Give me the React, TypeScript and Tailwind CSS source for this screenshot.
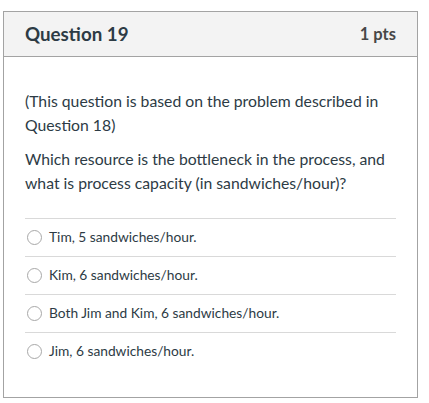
const answers = [
  'Tim, 5 sandwiches/hour.',
  'Kim, 6 sandwiches/hour.',
  'Both Jim and Kim, 6 sandwiches/hour.',
  'Jim, 6 sandwiches/hour.',
];

export default function App() {
  return (
    <div className="min-h-screen bg-white pt-[11px] pl-[3px] font-['Lato',sans-serif] text-[#2d3b45]">
      <div className="w-[415px] border border-[#a3a3a3]">
        <div className="flex h-[45px] items-center justify-between border-b border-[#a3a3a3] bg-[#f3f3f3] px-[21px]">
          <h2 className="text-[18.75px] font-bold">Question 19</h2>
          <span className="text-[16.5px] font-bold text-[#474747]">1 pts</span>
        </div>
        <div className="px-[21px] pt-[32px] pb-[27px]">
          <p className="text-[15.75px] leading-[24px]">
            (This question is based on the problem described in Question 18)
          </p>
          <p className="mt-[10px] text-[15.75px] leading-[24px]">
            Which resource is the bottleneck in the process, and what is process capacity (in sandwiches/hour)?
          </p>
          <div className="mt-[23px]">
            {answers.map((a) => (
              <label key={a} className="flex h-[38px] items-center border-t border-[#d9d9d9] pl-[2px]">
                <span className="h-[15px] w-[15px] rounded-full border border-[#a8a8a8] bg-white" />
                <span className="ml-[7px] text-[13.75px]">{a}</span>
              </label>
            ))}
          </div>
        </div>
      </div>
    </div>
  );
}
